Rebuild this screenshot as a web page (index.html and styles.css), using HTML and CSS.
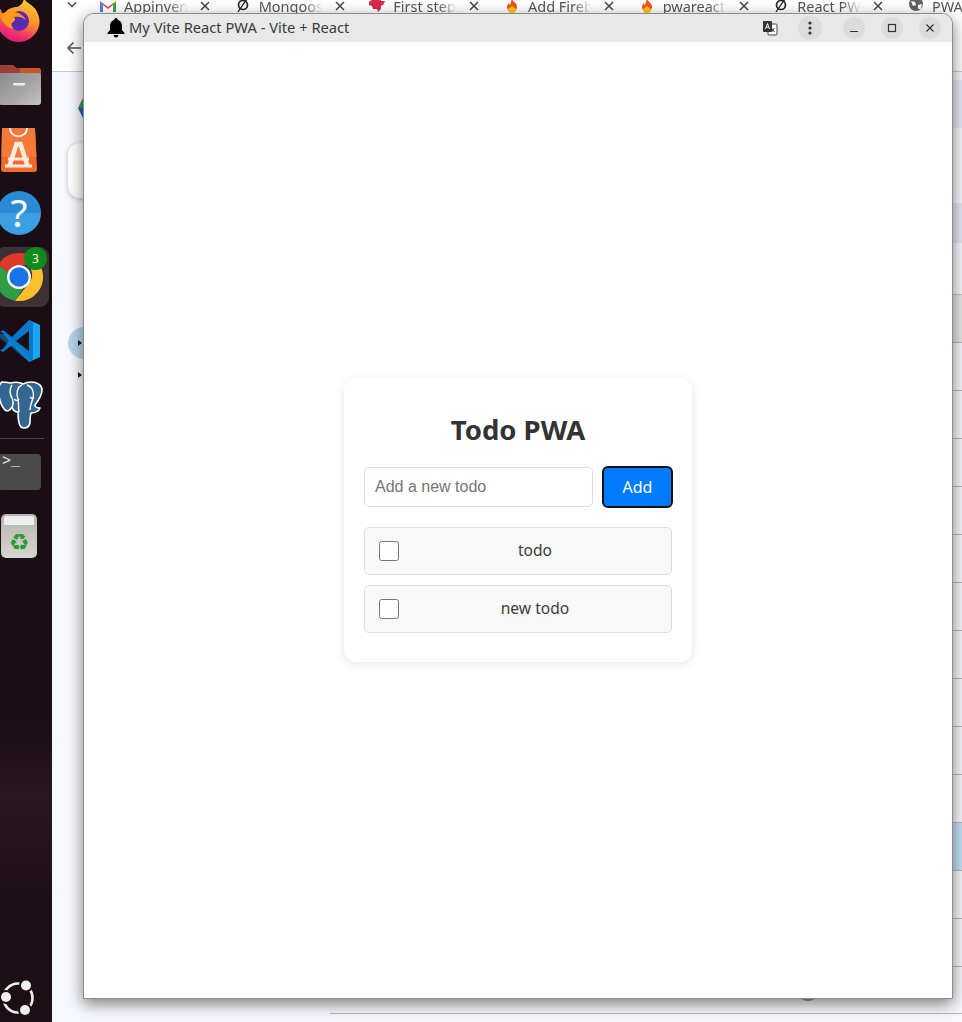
FILE: index.html
```html
<!DOCTYPE html>
<html lang="en">
<head>
<meta charset="utf-8">
<title>My Vite React PWA - Vite + React</title>
<link rel="stylesheet" href="styles.css">
</head>
<body>
<div class="desktop">
  <aside class="dock">
    <svg class="slot first" viewBox="0 0 52 53">
      <defs>
        <linearGradient id="ff" x1="0.75" y1="0" x2="0.35" y2="1"><stop offset="0" stop-color="#ffd43a"/><stop offset=".5" stop-color="#ff8a2a"/><stop offset=".8" stop-color="#f0316a"/><stop offset="1" stop-color="#e0187f"/></linearGradient>
      </defs>
      <path d="M24-3c0 5 8 7 12 13 4 7 5 14 1 21-4 7-11 11-18 11C8 42 0 34-3 25-4 16-2 12 1 9c0 3 1 4 3 5 3-5 8-7 13-7 4-1 7-5 7-10z" fill="url(#ff)"/>
      <circle cx="19" cy="21" r="10" fill="#5a2bb0"/>
      <path d="M0 16c5-5 10-6 15-4 5 1 9 4 11 8-3-3-8-4-12-3 2 2 1 4-1 5-3 2-1 5 1 7-6-1-11-5-14-13z" fill="#ff9a1f"/>
    </svg>
    <svg class="slot" viewBox="0 0 52 64">
      <defs><linearGradient id="fold" x1="0" y1="0" x2="1" y2="1"><stop offset="0" stop-color="#8a8a8a"/><stop offset=".6" stop-color="#a8a8a8"/><stop offset="1" stop-color="#c4c4c4"/></linearGradient></defs>
      <path d="M-1 14q0-2 2-2h12l4 3h21q3 0 3 3v8H-1z" fill="#9c3f3a"/>
      <path d="M20 15h18q3 0 3 3v8H20z" fill="#c9552b"/>
      <path d="M-1 23q0-3 3-3h36q3 0 3 3v26q0 3-3 3H2q-3 0-3-3z" fill="url(#fold)"/>
      <rect x="13" y="30" width="12" height="2.500" rx="1" fill="#eee"/>
    </svg>
    <svg class="slot" viewBox="0 0 52 64">
      <path d="M3 11h31q1 0 1 1l2 40q0 3-3 3H4q-3 0-3-3l1-40q0-1 1-1z" fill="#f0692d"/>
      <path d="M3 11h31q1 0 1 1l1.500 28H1.500L2 12q0-1 1-1z" fill="#f47a3c"/>
      <path d="M10 11c0 11 17 11 17 0" fill="none" stroke="#fff" stroke-width="1.600"/>
      <path d="M9.500 49l7-22h4l7 22" fill="none" stroke="#fde9dd" stroke-width="4.500"/>
      <path d="M8 42h21M5 49h27" fill="none" stroke="#fde9dd" stroke-width="2.800"/>
    </svg>
    <svg class="slot" viewBox="0 0 52 64">
      <defs><linearGradient id="hlp" x1="0" y1="0" x2="0" y2="1"><stop offset=".5" stop-color="#2a8ad6"/><stop offset=".5" stop-color="#3c9fe2"/></linearGradient></defs>
      <circle cx="19" cy="32" r="22" fill="url(#hlp)"/>
      <text x="19" y="46" class="help-mark">?</text>
    </svg>
    <div class="active-tile">
      <svg class="slot" viewBox="0 0 52 64">
        <path d="M19 8a24 24 0 0 1 20.800 12H19a12 12 0 0 0-11 7L-1.800 19.900A24 24 0 0 1 19 8z" fill="#e0392c"/>
        <path d="M-1.800 19.900A24 24 0 0 0 15 55.700L24 42a12 12 0 0 1-16-15z" fill="#2f9e44"/>
        <path d="M39.800 20A24 24 0 0 1 15 55.700L29 38a12 12 0 0 0-2-18z" fill="#fbc02d"/>
        <circle cx="19" cy="32" r="12" fill="#fff"/>
        <circle cx="19" cy="32" r="9.700" fill="#1a73e8"/>
      </svg>
      <span class="badge">3</span>
    </div>
    <svg class="slot" viewBox="0 0 52 64">
      <path d="M29 11l11 5v32l-11 5z" fill="#1ba4f4"/>
      <path d="M29 11L12 28 3 21l-3 2v18l3 2 9-7 17 17 4-3V14z" fill="#0a78c8"/>
      <path d="M29 22L16 32l13 10z" fill="#1b0f16"/>
      <path d="M3 24l-3-1v18l3-1 6-8z" fill="#1b0f16"/>
      <path d="M0 25l5 0 24 22v6L0 29z" fill="#0f8ad8" opacity=".5"/>
    </svg>
    <svg class="slot" viewBox="0 0 52 64">
      <path d="M2 9c-3 2-4 8-3 14 1 6 3 11 6 14 3 2 5 0 7-3 1 3 3 5 6 5 0 5 0 12 3 15 3 2 8 1 9-4 0-3 0-7 1-10 4 0 8-2 9-5-3 0-5-1-5-3 3-4 7-10 7-15 0-5-5-8-11-8-3 0-6 1-8 2-3-2-8-2-13-1-4-1-6-1-8-1z" fill="#336791" stroke="#fff" stroke-width="1.600" stroke-linejoin="round"/>
      <path d="M12 12c-3 4-2 10 0 13 2 4 1 7 0 9M22 12c-5 2-6 9-4 14 1 3 0 8 1 13M27 12c6 2 7 8 6 13-1 4-3 7-3 12M14 26c2 2 4 2 5 0M30 24c2 2 3 2 4 0" fill="none" stroke="#fff" stroke-width="1.400"/>
    </svg>
    <hr class="dock-sep">
    <div class="slot terminal"><span class="prompt">&gt;_</span></div>
    <div class="slot trash-slot">
      <div class="trash"><span class="trash-lid"></span><span class="recycle">♻</span></div>
    </div>
    <svg class="ubuntu" viewBox="0 0 52 40">
      <circle cx="18" cy="20" r="14.500" fill="none" stroke="#eee" stroke-width="2.600"/>
      <circle cx="26" cy="7.500" r="7" fill="#1b0f16"/><circle cx="6" cy="19" r="7" fill="#1b0f16"/><circle cx="25" cy="32" r="7" fill="#1b0f16"/>
      <circle cx="26" cy="7.500" r="5" fill="#eee"/><circle cx="6" cy="19" r="5" fill="#eee"/><circle cx="25" cy="32" r="5" fill="#eee"/>
    </svg>
  </aside>

  <main class="browser">
    <div class="tabstrip">
      <div class="chevron-cell"><svg width="12" height="8" viewBox="0 0 12 8"><path d="M2 1.500l4 4 4-4" fill="none" stroke="#555" stroke-width="1.600"/></svg></div>
      <div class="tab">
        <svg class="tab-icon" viewBox="0 0 16 12"><path d="M0 12V1l8 6 8-6v11h-3V5L8 9 3 5v7z" fill="#ea4335"/><path d="M0 2v10h3V4z" fill="#4285f4"/><path d="M13 4v8h3V2z" fill="#34a853"/><path d="M13 4l3-2V0z" fill="#fbbc04"/></svg>
        <span class="tab-label">Appinventor</span><svg class="tab-x" viewBox="0 0 10 10"><path d="M1 1l8 8M9 1l-8 8"/></svg>
      </div>
      <div class="tab">
        <svg class="tab-icon" viewBox="0 0 16 14"><circle cx="8" cy="6" r="4.500" fill="none" stroke="#222" stroke-width="1.700"/><path d="M12 0L3 13" stroke="#222" stroke-width="1.300"/></svg>
        <span class="tab-label">Mongoose</span><svg class="tab-x" viewBox="0 0 10 10"><path d="M1 1l8 8M9 1l-8 8"/></svg>
      </div>
      <div class="tab">
        <svg class="tab-icon" viewBox="0 0 16 14"><path d="M0 3l4-3 5 1 2-1 1 2 4 0-2 4-2 1 0 3-3 3-1-3-4 0-1-3-3-1z" fill="#d6294d"/></svg>
        <span class="tab-label">First steps</span><svg class="tab-x" viewBox="0 0 10 10"><path d="M1 1l8 8M9 1l-8 8"/></svg>
      </div>
      <div class="tab">
        <svg class="tab-icon" viewBox="0 0 16 14"><path d="M8 0c1 3 5 4 5 8a5 5 0 0 1-10 0c0-2 1-3 2-4 0 1 1 2 1 2 1-2 1-4 2-6z" fill="#f4511e"/><path d="M8 14a4 4 0 0 1-4-4l4-3 4 3a4 4 0 0 1-4 4z" fill="#ffc107"/></svg>
        <span class="tab-label">Add Firebase</span><svg class="tab-x" viewBox="0 0 10 10"><path d="M1 1l8 8M9 1l-8 8"/></svg>
      </div>
      <div class="tab">
        <svg class="tab-icon" viewBox="0 0 16 14"><path d="M8 0c1 3 5 4 5 8a5 5 0 0 1-10 0c0-2 1-3 2-4 0 1 1 2 1 2 1-2 1-4 2-6z" fill="#f4511e"/><path d="M8 14a4 4 0 0 1-4-4l4-3 4 3a4 4 0 0 1-4 4z" fill="#ffc107"/></svg>
        <span class="tab-label">pwareact</span><svg class="tab-x" viewBox="0 0 10 10"><path d="M1 1l8 8M9 1l-8 8"/></svg>
      </div>
      <div class="tab">
        <svg class="tab-icon" viewBox="0 0 16 14"><circle cx="8" cy="6" r="4.500" fill="none" stroke="#222" stroke-width="1.700"/><path d="M12 0L3 13" stroke="#222" stroke-width="1.300"/></svg>
        <span class="tab-label">React PWA</span><svg class="tab-x" viewBox="0 0 10 10"><path d="M1 1l8 8M9 1l-8 8"/></svg>
      </div>
      <div class="tab">
        <svg class="tab-icon" viewBox="0 0 16 14"><circle cx="8" cy="5" r="7" fill="#5f6368"/><path d="M3 2l4 1 1 3-3 1zM10 6l4-1-1 5-3 0z" fill="#fff"/></svg>
        <span class="tab-label">PWA Guide</span>
      </div>
    </div>
    <div class="toolbar">
      <svg width="16" height="14" viewBox="0 0 16 14"><path d="M15 7H2M7.500 1.500L2 7l5.500 5.500" fill="none" stroke="#555" stroke-width="1.600"/></svg>
    </div>
    <div class="content">
      <div class="side">
        <svg class="site-logo" width="12" height="24" viewBox="0 0 12 24"><path d="M0 12L5 2 12 0v12z" fill="#2e9e4f"/><path d="M0 12l5 10 7 2V12z" fill="#1f5fbf"/></svg>
        <div class="side-card"></div>
        <div class="side-tree">
          <div class="tree-active"><span class="caret"></span></div>
          <div class="tree-row"><span class="caret"></span></div>
        </div>
      </div>
      <div class="rows">
        <div class="row row-blue row-first"></div>
        <div class="gap-a"></div>
        <div class="row-tint"></div>
        <div class="gap-b"></div>
        <div class="row row-grey"></div>
        <div class="row"></div><div class="row"></div><div class="row"></div><div class="row"></div><div class="row"></div>
        <div class="row"></div><div class="row"></div><div class="row"></div><div class="row"></div><div class="row"></div>
        <div class="row row-sel"></div>
        <div class="row"></div>
        <div class="row"></div>
        <div class="row row-last"><span class="avatar"></span></div>
      </div>
    </div>
  </main>

  <section class="pwa">
    <header class="titlebar">
      <svg class="bell" width="18" height="20" viewBox="0 0 18 20"><path d="M9 0a1.700 1.700 0 0 1 1.700 1.800C13.500 2.600 15 5 15 8v4l2.500 3v1H.5v-1L3 12V8c0-3 1.500-5.400 4.300-6.200A1.700 1.700 0 0 1 9 0zM6.500 17h5a2.500 2.500 0 0 1-5 0z" fill="#000"/></svg>
      <span class="title-text">My Vite React PWA - Vite + React</span>
      <svg class="translate" width="16" height="16" viewBox="0 0 16 16"><rect x="6" y="4" width="9" height="11" rx="1" fill="#fff" stroke="#444"/><rect x="1" y="1" width="9" height="11" rx="1" fill="#333"/><path d="M3.500 9L5.500 3.500 7.500 9M4.200 7.200h2.600" fill="none" stroke="#fff"/><path d="M9.500 8l3 4M12.500 8l-3 4" stroke="#444"/></svg>
      <button class="win-btn kebab" type="button" aria-label="Menu"><svg width="4" height="14" viewBox="0 0 4 14"><circle cx="2" cy="2" r="1.600" fill="#333"/><circle cx="2" cy="7" r="1.600" fill="#333"/><circle cx="2" cy="12" r="1.600" fill="#333"/></svg></button>
      <button class="win-btn" type="button" aria-label="Minimize"><svg width="10" height="10" viewBox="0 0 10 10"><path d="M1 8.500h8" stroke="#333" stroke-width="1.200"/></svg></button>
      <button class="win-btn" type="button" aria-label="Maximize"><svg width="10" height="10" viewBox="0 0 10 10"><rect x="1.500" y="1.500" width="7" height="7" fill="none" stroke="#333" stroke-width="1.200"/></svg></button>
      <button class="win-btn" type="button" aria-label="Close"><svg width="10" height="10" viewBox="0 0 10 10"><path d="M1.500 1.500l7 7M8.500 1.500l-7 7" stroke="#333" stroke-width="1.200"/></svg></button>
    </header>
    <div class="pwa-body">
      <div class="card">
        <h1>Todo PWA</h1>
        <form class="add-form">
          <input class="add-input" type="text" placeholder="Add a new todo">
          <button class="add-btn" type="button">Add</button>
        </form>
        <ul class="todos">
          <li class="todo"><input class="check" type="checkbox"><span class="todo-text">todo</span></li>
          <li class="todo"><input class="check" type="checkbox"><span class="todo-text">new todo</span></li>
        </ul>
      </div>
    </div>
  </section>
</div>
</body>
</html>
```
FILE: styles.css
```css
* { box-sizing: border-box; }
html, body { margin: 0; padding: 0; height: 100%; }
body { overflow: hidden; background: #f8f9fe; font-family: "Noto Sans", "Open Sans", sans-serif; }

.desktop { position: relative; display: flex; width: 962px; height: 1022px; overflow: hidden; }

/* Dock */
.dock {
  width: 52px; height: 1022px; flex: none; display: flex; flex-direction: column; overflow: hidden;
  background: linear-gradient(180deg, #1a0e14 0%, #1a0e14 70%, #2a1720 78%, #1c0f16 90%, #1b0e15 100%);
}
.slot { display: block; flex: none; width: 52px; height: 64px; overflow: visible; }
.slot.first { height: 53px; }
.active-tile { position: relative; width: 52px; height: 64px; flex: none; }
.active-tile::before {
  content: ""; position: absolute; left: -4px; top: 2px; width: 53px; height: 60px; border-radius: 9px; background: #3d3136;
}
.active-tile .slot { position: relative; }
.badge {
  position: absolute; left: 24px; top: 2px; width: 23px; height: 23px; border-radius: 50%;
  background: #0e8a1e; color: #f2f7d8; font-size: 12px; line-height: 23px; text-align: center;
}
.help-mark { font: 400 39px "Noto Sans", sans-serif; fill: #fff; text-anchor: middle; }
.dock-sep { width: 44px; height: 1px; border: 0; background: #4b4046; flex: none; margin: 1px 0; }
.terminal { position: relative; }
.terminal::before {
  content: ""; position: absolute; left: -2px; top: 14px; width: 43px; height: 36px; border-radius: 4px; background: #4a4a4a;
}
.prompt { position: absolute; left: 2px; top: 13px; color: #eee; font: 15px/18px "Liberation Mono", monospace; }
.trash-slot { display: flex; align-items: center; padding-left: 1px; }
.trash {
  width: 36px; height: 44px; border-radius: 5px; display: flex; flex-direction: column; align-items: center;
  background: linear-gradient(180deg, #b5b5ae, #d6d6d0);
}
.trash-lid { width: 30px; height: 9px; margin-top: 2px; border-radius: 2px 2px 0 0; background: #eee; flex: none; }
.recycle { color: #2a9a2e; font: 23px/1 "DejaVu Sans", sans-serif; margin-top: 6px; }
.ubuntu { display: block; width: 52px; height: 40px; margin-top: auto; margin-bottom: 4px; flex: none; }

/* Background browser */
.browser { flex: 1; min-width: 0; display: flex; flex-direction: column; }
.tabstrip { height: 24px; flex: none; display: flex; background: #fff; overflow: hidden; }
.chevron-cell { width: 42px; padding: 1px 0 0 14px; flex: none; line-height: 0; }
.tab { width: 134.670px; flex: none; height: 12px; display: flex; align-items: center; padding-left: 6px; }
.tab-icon { width: 16px; height: 14px; flex: none; }
.tab-label {
  width: 64px; margin-left: 8px; overflow: hidden; white-space: nowrap; color: #555; font-size: 14.500px; line-height: 18px; flex: none;
  -webkit-mask-image: linear-gradient(90deg, #000 70%, transparent);
  mask-image: linear-gradient(90deg, #000 70%, transparent);
}
.tab-x { width: 10px; height: 10px; margin-left: 12px; flex: none; fill: none; stroke: #444; stroke-width: 1.500; }
.toolbar {
  height: 48px; flex: none; display: flex; align-items: center; padding-left: 14px;
  background: #fff; border-bottom: 1px solid #ccc;
}
.content { flex: 1; display: flex; min-height: 0; }
.side { width: 278px; flex: none; display: flex; flex-direction: column; }
.site-logo { display: block; margin: 24px 0 0 26px; flex: none; }
.side-card {
  width: 220px; height: 55px; margin: 23px 0 0 16px; border-radius: 12px; background: #fff; box-shadow: 0 1px 5px rgba(0,0,0,.25); flex: none;
}
.side-tree { margin: 129px 0 0 16px; }
.tree-active { width: 32px; height: 32px; border-radius: 50%; background: #b8d6ee; display: flex; align-items: center; padding-left: 10px; }
.tree-row { height: 31px; display: flex; align-items: center; padding-left: 10px; padding-top: 1px; }
.caret { width: 0; height: 0; border-left: 4px solid #111; border-top: 3px solid transparent; border-bottom: 3px solid transparent; }
.rows { flex: 1; min-width: 0; display: flex; flex-direction: column; }
.row { height: 48px; flex: none; border-bottom: 1px solid #b9b9b9; display: flex; align-items: center; }
.row-first { margin-top: 8px; }
.row-blue { background: #e3e9f6; border-bottom: 0; }
.gap-a { height: 75px; flex: none; }
.row-tint { height: 40px; flex: none; background: #e3e9f6; }
.gap-b { height: 52px; flex: none; border-bottom: 1px solid #c6c6c6; }
.row-grey { background: #e5e8e7; }
.row-sel { background: #c4e1f8; }
.row-last { height: 47px; border-bottom: 1px solid #b9b9b2; padding-left: 467px; }
.avatar { width: 22px; height: 22px; border-radius: 50%; background: #999; }

/* PWA window */
.pwa {
  position: absolute; left: 83px; top: 13px; width: 870px; height: 986px;
  display: flex; flex-direction: column; background: #fff;
  border: 1px solid #8c8c8c; border-radius: 11px 11px 0 0;
  box-shadow: 0 5px 16px rgba(0,0,0,.5);
  overflow: hidden;
}
.titlebar { height: 28px; flex: none; display: flex; align-items: center; background: #e8e8e8; padding-left: 23px; }
.bell { flex: none; }
.title-text { margin: -2px 0 0 4px; font-size: 14.700px; color: #3a3a3a; white-space: nowrap; }
.translate { margin-left: auto; margin-right: 20px; flex: none; }
.win-btn {
  width: 22px; height: 22px; padding: 0; margin-right: 16px; border: 0; border-radius: 50%; background: #dcdcdc;
  display: flex; align-items: center; justify-content: center; flex: none;
}
.win-btn:last-child { margin-right: 11px; }
.kebab { width: 24px; height: 24px; margin-right: 21px; }
.pwa-body { flex: 1; display: flex; align-items: center; justify-content: center; min-height: 0; }

.card {
  width: 348px; padding: 30px 20px 29px; background: #fff; border-radius: 12px; box-shadow: 0 2px 10px rgba(0,0,0,.1);
}
.card h1 { margin: 0 0 14px; text-align: center; font-size: 27.500px; line-height: 44px; font-weight: 700; color: #333; }
.add-form { display: flex; align-items: center; gap: 9px; margin: 0 -1px 19px 0; }
.add-input {
  width: 229px; height: 40px; padding: 0 10px; border: 1px solid #ddd; border-radius: 5px; background: #fff; flex: none;
  font: 16px "Liberation Sans", Arial, sans-serif; color: #333;
}
.add-input::placeholder { color: #757575; opacity: 1; }
.add-btn {
  width: 71px; height: 42px; padding: 0; border: 2px solid #111; border-radius: 6px; background: #007bff; color: #fff; flex: none;
  font: 400 16px "Noto Sans", sans-serif;
}
.todos { list-style: none; margin: 0; padding: 0; display: flex; flex-direction: column; gap: 10px; }
.todo {
  height: 48px; display: flex; align-items: center; padding: 0 15px 0 14px; background: #f9f9f9; border: 1px solid #ddd; border-radius: 5px;
}
.check {
  appearance: none; -webkit-appearance: none; width: 20px; height: 20px; margin: 0; flex: none;
  background: #fff; border: 1px solid #767676; border-radius: 2.500px;
}
.todo-text { flex: 1; margin: -2px 0 0 15px; text-align: center; font-size: 15.600px; color: #3c3c3c; }
```
